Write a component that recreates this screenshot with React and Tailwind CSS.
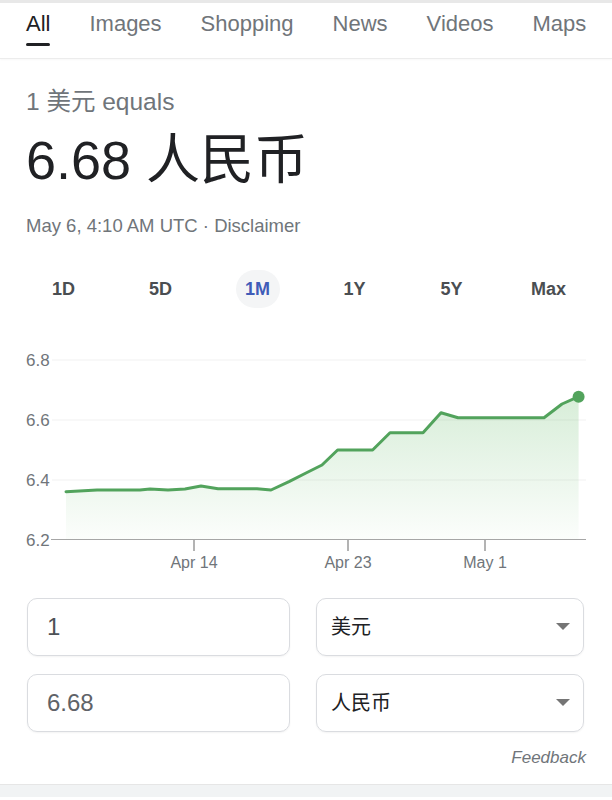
import React from 'react';

const tabs = ['All', 'Images', 'Shopping', 'News', 'Videos', 'Maps'];
const periods = ['1D', '5D', '1M', '1Y', '5Y', 'Max'];

// chart points, in page pixels
const pts = [
    [66, 491.7], [97, 490], [140, 490], [150, 489], [168, 490], [185, 489],
    [201, 486], [218, 488.7], [257, 488.7], [271, 490], [289, 481.7], [306, 473],
    [322, 465], [337.6, 450], [372.6, 450], [390, 432.7], [423, 432.7], [441, 412.7],
    [458, 417.7], [544, 417.7], [562, 404], [578.6, 396.7],
];

function Chart() {
    const line = pts.map(([x, y], i) => `${i ? 'L' : 'M'}${x} ${y}`).join(' ');
    const area = `${line} L578.6 539 L66 539 Z`;
    return (
        <svg width="612" height="271" className="block" style={{ fontFamily: '"Liberation Sans", Arial, sans-serif' }}>
            <defs>
                <linearGradient id="fill" x1="0" y1="0" x2="0" y2="1">
                    <stop offset="0%" stopColor="#4caf50" stopOpacity="0.22" />
                    <stop offset="100%" stopColor="#4caf50" stopOpacity="0.02" />
                </linearGradient>
            </defs>
            <g transform="translate(0,-309)">
                {[360, 420, 480].map(y => (
                    <line key={y} x1="52" x2="586" y1={y} y2={y} stroke="#f1f1f1" strokeWidth="1" />
                ))}
                {[['6.8', 360], ['6.6', 420], ['6.4', 480], ['6.2', 539.5]].map(([t, y]) => (
                    <text key={t} x="26" y={y + 6} fontSize="17" fill="#70757a">{t}</text>
                ))}
                <path d={area} fill="url(#fill)" />
                <line x1="51" x2="586" y1="539.5" y2="539.5" stroke="#a6a6a6" strokeWidth="1" />
                {[['Apr 14', 194], ['Apr 23', 348], ['May 1', 485]].map(([t, x]) => (
                    <g key={t}>
                        <line x1={x} x2={x} y1="540" y2="551" stroke="#8a8a8a" strokeWidth="1.3" />
                        <text x={x} y="568" fontSize="16" fill="#70757a" textAnchor="middle">{t}</text>
                    </g>
                ))}
                <path d={line} fill="none" stroke="#52a35c" strokeWidth="3" strokeLinejoin="round" strokeLinecap="round" />
                <circle cx="578.6" cy="396.7" r="6" fill="#52a35c" />
            </g>
        </svg>
    );
}

function Caret() {
    return (
        <svg width="14" height="8" viewBox="0 0 14 8">
            <path d="M0 0 L14 0 L7 7 Z" fill="#757575" />
        </svg>
    );
}

export default function App() {
    return (
        <div
            className="w-[612px] h-[800px] bg-white overflow-hidden flex flex-col"
            style={{ fontFamily: '"Liberation Sans", Arial, "Noto Sans CJK SC", sans-serif' }}
        >
            <div className="h-[3px] bg-[#e8e8e8]" />

            {/* tabs */}
            <div className="h-[56px] border-b border-[#ececec] shadow-[0_1px_2px_rgba(0,0,0,0.03)] flex gap-[39px] pl-[26px] pt-[7px]">
                {tabs.map(t => (
                    <div key={t} className="flex flex-col">
                        <span className={`text-[22px] leading-[27px] ${t === 'All' ? 'text-[#202124]' : 'text-[#70757a]'}`}>{t}</span>
                        {t === 'All' && <div className="mt-[6px] h-[3px] bg-[#202124] rounded-sm" />}
                    </div>
                ))}
            </div>

            {/* headline */}
            <div className="px-[26px]">
                <div className="mt-[29px] h-[28px] flex items-center text-[24.5px] text-[#70757a]">1 美元 equals</div>
                <div className="mt-[14px] h-[60px] flex items-center text-[54px] text-[#202124]">6.68 人民币</div>
                <div className="mt-[24px] h-[24px] flex items-center text-[18.5px] text-[#70757a]">
                    May 6, 4:10 AM UTC · Disclaimer
                </div>
            </div>

            {/* periods */}
            <div className="mt-[31px] h-[40px] grid grid-cols-6 px-[15px]">
                {periods.map(p => (
                    <div key={p} className="flex items-center justify-center">
                        {p === '1M' ? (
                            <span className="w-[44px] h-[38px] rounded-full bg-[#f4f5f6] flex items-center justify-center text-[18px] font-bold text-[#3f5cb8]">
                                {p}
                            </span>
                        ) : (
                            <span className="text-[18px] font-bold text-[#4a4e52]">{p}</span>
                        )}
                    </div>
                ))}
            </div>

            <Chart />

            {/* converter */}
            <div className="mt-[18px] pl-[27px] grid grid-cols-[263px_268px] gap-x-[26px] gap-y-[18px]">
                <div className="h-[58px] rounded-[10px] border border-[#dadce0] shadow-[0_1px_2px_rgba(0,0,0,0.05)] flex items-center pl-[19px] text-[24px] text-[#4d5156]">1</div>
                <div className="h-[58px] rounded-[10px] border border-[#dadce0] shadow-[0_1px_2px_rgba(0,0,0,0.05)] flex items-center justify-between pl-[14px] pr-[13px] text-[20px] text-[#202124]">
                    <span>美元</span>
                    <Caret />
                </div>
                <div className="h-[58px] rounded-[10px] border border-[#dadce0] shadow-[0_1px_2px_rgba(0,0,0,0.05)] flex items-center pl-[19px] text-[24px] text-[#5f6368]">6.68</div>
                <div className="h-[58px] rounded-[10px] border border-[#dadce0] shadow-[0_1px_2px_rgba(0,0,0,0.05)] flex items-center justify-between pl-[14px] pr-[13px] text-[20px] text-[#202124]">
                    <span>人民币</span>
                    <Caret />
                </div>
            </div>

            <div className="mt-[15px] h-[22px] flex items-center justify-end pr-[26px] text-[17px] italic text-[#70757a]">Feedback</div>

            <div className="mt-[15px] h-[13px] bg-[#f1f3f4] border-t border-[#e6e6e6]" />
        </div>
    );
}
